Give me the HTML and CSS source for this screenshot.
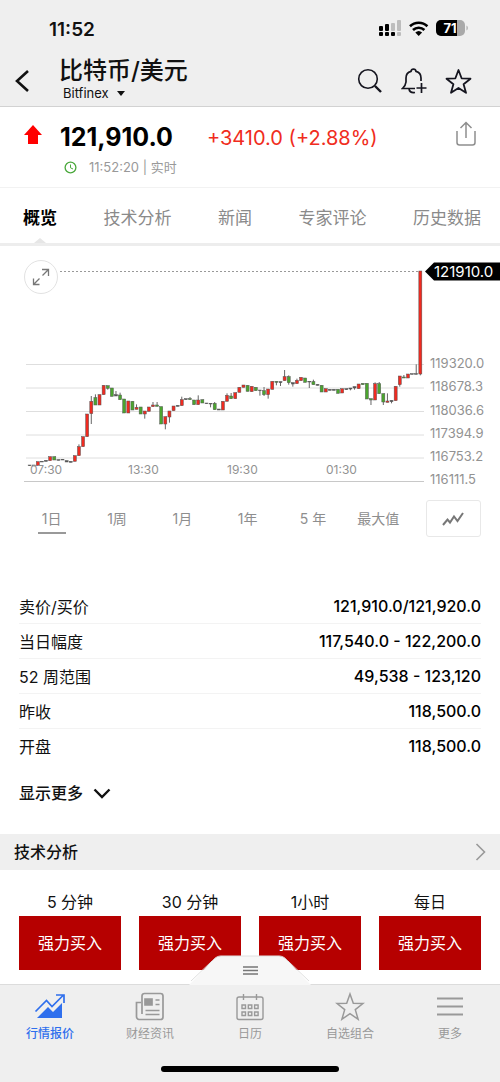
FILE: index.html
```html
<!DOCTYPE html>
<html lang="zh-CN">
<head>
<meta charset="utf-8">
<meta name="viewport" content="width=device-width, initial-scale=1">
<title>比特币/美元</title>
<link rel="stylesheet" href="styles.css">
</head>
<body>
<header class="top">
  <div class="status">
    <time class="clock">11:52</time>
    <svg class="status-icons" width="90" height="20" viewBox="0 0 90 20" aria-hidden="true">
      <g fill="#000"><rect x="1" y="7" width="4" height="5" rx="1"/><rect x="7" y="5" width="4" height="7" rx="1"/><rect x="1" y="13" width="4" height="4" rx="1"/><rect x="7" y="13" width="4" height="4" rx="1"/><rect x="13" y="13" width="4" height="4" rx="1"/></g>
      <g fill="#bdbdbd"><rect x="13" y="4" width="4" height="8" rx="1"/><rect x="19" y="1" width="4" height="11" rx="1"/><rect x="19" y="13" width="4" height="4" rx="1"/></g>
      <g fill="none" stroke="#000" stroke-width="2.6"><path d="M32 7.2a12.5 12.5 0 0 1 17.400 0"/><path d="M35 11a8.200 8.200 0 0 1 11.400 0"/></g>
      <path d="M37.300 13.500a5 5 0 0 1 6.800 0L40.700 17z"/>
      <rect x="58" y="1" width="29" height="16" rx="5" fill="#a9a9a9"/>
      <path d="M63 1h16v16H63a5 5 0 0 1-5-5V6a5 5 0 0 1 5-5z"/>
      <path d="M88.500 6.500v5a3 3 0 0 0 0-5z" fill="#a9a9a9"/>
      <text x="72" y="14" class="battery">71</text>
    </svg>
  </div>
  <div class="titlebar">
    <button class="icon-btn back" aria-label="返回"><svg width="16" height="24" viewBox="0 0 16 24"><path d="M14 2 3 12l11 10" fill="none" stroke="#111" stroke-width="2.600"/></svg></button>
    <div class="names">
      <h1>比特币/美元</h1>
      <button class="exchange">Bitfinex <svg width="8" height="5" viewBox="0 0 8 5"><path d="M0 0h8L4 5z" fill="#111"/></svg></button>
    </div>
    <div class="actions">
      <button class="icon-btn" aria-label="搜索"><svg width="26" height="26" viewBox="0 0 26 26" fill="none" stroke="#15151f"><circle cx="11" cy="11" r="9.300" stroke-width="1.600"/><path d="m18 18 6 6" stroke-width="2.400"/></svg></button>
      <button class="icon-btn" aria-label="提醒"><svg width="26" height="26" viewBox="0 0 26 26" fill="none" stroke="#15151f" stroke-width="1.700"><path d="M14 20.500H1.500c2-2 3.300-3.500 3.500-6.500V10c0-3.500 2-5.800 5-6.600.200-1.500 1-2.200 2.500-2.200S14.800 2 15 3.400c3 .8 5 3.100 5 6.600v3"/><path d="M8 21c.5 2.500 2.500 4 6 3.500M20.500 15v10M15.500 20h10"/></svg></button>
      <button class="icon-btn" aria-label="收藏"><svg width="27" height="26" viewBox="0 0 27 26"><path d="m13.500 2 3.100 8.300 8.900.4-6.900 5.500 2.400 8.600-7.500-4.900L6 24.800l2.400-8.600-6.900-5.500 8.900-.4z" fill="none" stroke="#15151f" stroke-width="1.800" stroke-linejoin="round"/></svg></button>
    </div>
  </div>
</header>

<main>
  <section class="quote">
    <svg class="arrow" width="18" height="19" viewBox="0 0 18 19" aria-hidden="true"><path d="m9 0 9 10h-4v9H4v-9H0z" fill="#f00"/></svg>
    <div class="price-block">
      <div class="price-line"><strong class="price">121,910.0</strong><span class="change">+3410.0 (+2.88%)</span></div>
      <div class="stamp"><svg width="13" height="13" viewBox="0 0 13 13" fill="none" stroke="#4aa83c"><circle cx="6.500" cy="6.500" r="5.400" stroke-width="1.300"/><path d="M6.500 3.500v3.300L9 8"/></svg><span>11:52:20 | 实时</span></div>
    </div>
    <button class="icon-btn share" aria-label="分享"><svg width="20" height="25" viewBox="0 0 20 25" fill="none" stroke="#8e8e8e" stroke-width="1.500"><path d="M1 10v11.500c0 1.500 1 2.500 2.500 2.500h13c1.500 0 2.500-1 2.500-2.500V10M10 17V1.500M4.500 7 10 1.500 15.500 7"/></svg></button>
  </section>

  <nav class="tabs">
    <a href="#overview" class="active" aria-current="page">概览</a>
    <a href="#technical">技术分析</a>
    <a href="#news">新闻</a>
    <a href="#comments">专家评论</a>
    <a href="#history">历史数据</a>
  </nav>

  <section class="chart" id="overview">
    <svg class="plot" viewBox="0 246 500 250" role="img" aria-label="价格走势">
      <g class="grid">
        <path d="M26 364.500H424M26 388H424M26 411.500H424M26 435H424M26 458H424"/>
        <path class="base" d="M24 481.500H424"/>
      </g>
      <path class="last-line" d="M60 271.500H420"/>
      <g class="candles"></g>
      <g class="times"><text x="30" y="474">07:30</text><text x="128" y="474">13:30</text><text x="227" y="474">19:30</text><text x="326" y="474">01:30</text></g>
      <g class="levels"><text x="430" y="368">119320.0</text><text x="430" y="391">118678.3</text><text x="430" y="415">118036.6</text><text x="430" y="438">117394.9</text><text x="430" y="461">116753.2</text><text x="430" y="484">116111.5</text></g>
      <path d="M425 271.500 434 262.500H500V280.500H434z"/>
      <text class="last" x="434" y="277">121910.0</text>
    </svg>
    <button class="expand" aria-label="全屏"><svg width="18" height="18" viewBox="0 0 18 18" fill="none" stroke="#777" stroke-width="1.300"><path d="m10.500 7.500 6-6M10 1.500h6.500v6.500M7.500 10.500l-6 6M1.500 10.500v6H7.500"/></svg></button>
  </section>

  <div class="ranges">
    <button class="range active">1日</button>
    <button class="range">1周</button>
    <button class="range">1月</button>
    <button class="range">1年</button>
    <button class="range">5 年</button>
    <button class="range">最大值</button>
    <button class="chart-type" aria-label="图表类型"><svg width="22" height="14" viewBox="0 0 22 14"><path d="M1 13 5.500 7.500 8 10.500 12 4.500l3.500 4.500L21 1" fill="none" stroke="#777" stroke-width="2"/></svg></button>
  </div>

  <dl class="stats">
    <div><dt>卖价/买价</dt><dd>121,910.0/121,920.0</dd></div>
    <div><dt>当日幅度</dt><dd>117,540.0 - 122,200.0</dd></div>
    <div><dt>52 周范围</dt><dd>49,538 - 123,120</dd></div>
    <div><dt>昨收</dt><dd>118,500.0</dd></div>
    <div><dt>开盘</dt><dd>118,500.0</dd></div>
  </dl>
  <button class="more">显示更多 <svg width="18" height="11" viewBox="0 0 18 11"><path d="m1.500 1.500 7.500 7.500 7.500-7.500" fill="none" stroke="#111" stroke-width="2.400"/></svg></button>

  <section id="technical">
    <h2 class="section-head"><a href="#technical-all">技术分析 <svg width="11" height="18" viewBox="0 0 11 18"><path d="m1.500 1 8 8-8 8" fill="none" stroke="#999" stroke-width="1.600"/></svg></a></h2>
    <div class="signals">
      <div><span>5 分钟</span><button>强力买入</button></div>
      <div><span>30 分钟</span><button>强力买入</button></div>
      <div><span>1小时</span><button>强力买入</button></div>
      <div><span>每日</span><button>强力买入</button></div>
    </div>
  </section>
</main>

<footer class="dock">
  <button class="drawer" aria-label="展开"><svg width="122" height="30" viewBox="0 0 122 30"><path d="M0 30C2 28 4 26 6 24L22 7C26 3 28 1 32 1H90C94 1 96 3 100 7l16 17c2 2 4 4 6 6z" fill="#f7f7f7"/><path d="M2 26 22 7C26 3 28 1 32 1H90C94 1 96 3 100 7l20 19" fill="none" stroke="#e0e0e0"/><path d="M54 12h15M54 15.500h15M54 19h15" stroke="#777" stroke-width="1.300"/></svg></button>
  <nav class="bottom">
    <a href="#quotes" class="active"><svg width="32" height="30" viewBox="0 0 32 30"><path d="M3 26 14 15l5 5 9-9v15z" fill="#2f6fed"/><path d="m1.500 19.500 11-11 5.500 6L29.500 3M22 3h8v8" fill="none" stroke="#2f6fed" stroke-width="1.700"/></svg><span>行情报价</span></a>
    <a href="#headlines"><svg width="30" height="30" viewBox="0 0 30 30" fill="none" stroke="#999" stroke-width="1.700"><path d="M7 22V4c0-1.500 1-2.500 2.500-2.500h16C27 1.500 28 2.500 28 4v21c0 1.500-1 2.500-2.500 2.500H4C2.500 27.500 1.500 26 1.500 24.500V10.500H6"/><path d="M10.500 18.500h14M10.500 22.500h14M20.500 8h4M20.500 12.500h4"/><path d="M10 7h7v6h-7z" fill="#999"/></svg><span>财经资讯</span></a>
    <a href="#calendar"><svg width="30" height="30" viewBox="0 0 30 30" fill="none" stroke="#999" stroke-width="1.400"><rect x="2" y="5" width="26" height="22.500" rx="2"/><path d="M8.500 2v6M21.500 2v6"/><path d="M7 13h3.500v3.500H7zM13.300 13h3.500v3.500h-3.500zM19.600 13h3.500v3.500h-3.500zM7 20h3.500v3.500H7zM13.300 20h3.500v3.500h-3.500zM19.600 20h3.500v3.500h-3.500z"/></svg><span>日历</span></a>
    <a href="#watchlist"><svg width="30" height="30" viewBox="0 0 30 30"><path d="m15 2 3.300 9.300 9.700.2-7.700 6.100 2.800 9.700-8.100-5.600-8.100 5.600 2.800-9.700L2 11.500l9.700-.2z" fill="none" stroke="#999" stroke-width="1.500"/></svg><span>自选组合</span></a>
    <a href="#menu"><svg width="28" height="30" viewBox="0 0 28 30"><path d="M1 6.500h26M1 14.500h26M1 22.500h26" stroke="#999" stroke-width="2"/></svg><span>更多</span></a>
  </nav>
  <div class="home"></div>
</footer>
<script src="chart.js"></script>
</body>
</html>
```
FILE: styles.css
```css
* { box-sizing: border-box; }
body {
  margin: 0;
  min-height: 100vh;
  display: flex;
  flex-direction: column;
  background: #fff;
  color: #111;
  font-family: Inter, "Noto Sans CJK SC", sans-serif;
}
button { padding: 0; border: 0; background: none; color: inherit; font: inherit; cursor: pointer; }
a { color: inherit; text-decoration: none; }
svg { display: block; }
h1, h2, dl, dd { margin: 0; }

.top { background: #efefef; border-bottom: 1px solid #d2d2d2; }
.status { height: 52px; padding: 6px 32px 0 49px; display: flex; justify-content: space-between; align-items: center; }
.clock { font-size: 19px; font-weight: 600; }
.battery { font-size: 13px; font-weight: 700; fill: #fff; text-anchor: middle; }
.titlebar { height: 54px; padding: 0 28px 0 14px; display: flex; align-items: center; }
.icon-btn { flex: none; }
.back { padding-top: 4px; }
.names { flex: 1; padding-left: 29px; display: flex; flex-direction: column; align-items: flex-start; }
h1 { font-size: 24px; line-height: 28px; font-weight: 500; }
.exchange { display: flex; align-items: center; gap: 8px; margin-left: 4px; font-size: 13px; line-height: 16px; }
.actions { display: flex; gap: 18px; padding-top: 4px; }

.quote { height: 81px; padding: 14px 24px 0; display: flex; align-items: flex-start; border-bottom: 1px solid #f2f2f2; }
.arrow { margin-top: 4px; }
.price-block { flex: 1; padding-left: 18px; }
.price-line { display: flex; align-items: center; gap: 34px; line-height: 30px; white-space: nowrap; }
.price { font-size: 25px; font-weight: 700; color: #000; }
.change { padding-top: 2px; font-size: 20px; color: #f02c20; }
.stamp { display: flex; align-items: center; gap: 12px; padding-left: 4px; font-size: 13px; line-height: 28px; color: #999; }

.tabs { height: 58px; padding: 0 19px 0 23px; display: flex; justify-content: space-between; border-bottom: 3px solid #ededed; font-size: 17px; line-height: 60px; color: #8a8a8a; white-space: nowrap; }
.tabs a { position: relative; height: 55px; }
.tabs .active { color: #000; font-weight: 700; }
.tabs .active::after { content: ""; position: absolute; left: 50%; bottom: 0; margin-left: -6px; border: 6px solid transparent; border-top: 0; border-bottom: 5px solid #e6e6e6; }

.chart { position: relative; }
.plot { width: 100%; height: auto; }
.grid path { fill: none; stroke: #dedede; }
.grid .base { stroke: #c8c8c8; }
.last-line { stroke: #999; stroke-dasharray: 2 2; }
.times, .levels { fill: #929292; font-size: 12px; }
.levels { font-size: 13px; }
.last { fill: #fff; font-size: 15px; }
.wick { stroke: #666; stroke-width: 1; }
.candle { stroke: #555; stroke-width: .5; }
.up { fill: #f02a20; }
.down { fill: #4aa52e; }
.flat { fill: #555; }
.expand { position: absolute; left: 24px; top: 14px; width: 34px; height: 34px; display: grid; place-items: center; border: 1px solid #e2e2e2; border-radius: 50%; background: #fff; }

.ranges { padding: 4px 19px 0; display: flex; align-items: center; font-size: 14px; color: #8e8e8e; }
.range { flex: 1; display: flex; justify-content: center; line-height: 28px; white-space: nowrap; }
.range.active::after { content: ""; position: absolute; width: 28px; height: 2px; margin-top: 27px; background: #999; }
.chart-type { width: 55px; height: 37px; margin-left: 15px; display: grid; place-items: center; border: 1px solid #e8e8e8; border-radius: 3px; }

.stats { padding: 52px 19px 0; }
.stats div { height: 35px; display: flex; justify-content: space-between; align-items: center; border-bottom: 1px solid #f3f3f3; }
.stats div:last-child { border-bottom-color: transparent; }
.stats dt { font-size: 16px; }
.stats dd { font-size: 16px; font-weight: 500; color: #000; }
.more { display: flex; align-items: center; gap: 10px; margin: 16px 19px 28px; font-size: 16px; font-weight: 500; line-height: 26px; }

.section-head { background: #efefef; font-size: 16px; font-weight: 500; line-height: 36px; }
.section-head a { display: flex; justify-content: space-between; align-items: center; padding: 0 14px; }
.signals { display: grid; grid-template-columns: repeat(4, 1fr); gap: 18px; padding: 18px 19px 14px; text-align: center; font-size: 16px; line-height: 28px; }
.signals span, .signals button { display: block; width: 100%; }
.signals button { height: 54px; background: #b60000; color: #fff; }

.dock { position: relative; margin-top: auto; background: #efefef; border-top: 1px solid #dcdcdc; padding-bottom: 10px; }
.drawer { position: absolute; left: 50%; bottom: 100%; transform: translateX(-50%); }
.bottom { display: grid; grid-template-columns: repeat(5, 1fr); padding: 7px 0 24px; color: #999; font-size: 12px; line-height: 16px; }
.bottom a { display: flex; flex-direction: column; align-items: center; gap: 4px; }
.bottom .active { color: #2f6fed; font-weight: 500; }
.home { width: 178px; height: 6px; margin: 0 auto; border-radius: 3px; background: #000; }
```
FILE: chart.js
```js
// Each candle: kind (u up, d down, f flat), body top, body bottom, wick top, wick bottom.
// Levels are in thirds of a unit below y = 350.
const candles = `f 345 347;f 345 348;u 335 347;f 334 336;f 331 334;u 320 332;d 320 330;f 329 331;f 328 330;f 332 336;f 334 337;u 317 334;u 290 317 283;u 260 290;u 192 260;u 154 191 138 222;d 143 165 133;u 134 165;u 106 134;d 107 115 107 119;d 114 139;f 134 138 123;d 135 149 128;d 147 189;u 153 189;d 154 180;u 172 178 163;d 171 192;u 183 192 183 206;u 171 184;u 165 170 156;d 165 169 156;d 170 222;u 200 222 200 238;u 183 201 183 218;u 168 182;f 166 169;u 149 167 140;f 146 149;d 146 149 141;d 150 164;u 150 164 136;d 149 159;f 159 161;f 160 162 160 172;d 160 179 156;f 177 180;u 154 180;u 136 154 130;d 138 146 129;u 128 146;u 112 127;u 105 112;d 106 124;u 109 125;d 112 122;f 120 122 120 137;d 122 134 111 138;u 117 134 117 146;u 94 118;d 94 97 94 106;f 95 98 95 108;u 80 92 60;d 80 98 76 104;f 98 102 98 110;u 91 101 86;u 82 92;d 84 97;f 94 96 94 114;d 95 104 89;f 103 106;d 106 126;u 116 126;f 118 121;f 118 121;d 118 130;u 116 129;f 116 119;f 114 117 114 121;f 110 114 110 119;u 102 116;d 100 104;d 100 147;d 146 150 146 165;u 101 150 97;d 101 131 96;d 131 156 131 165;u 153 157 130;f 151 155 151 160;u 109 152;u 78 104 78 110;d 81 84 75;u 72 84;f 71 73;f 71 73 43;u -237 72 -237 76`.split(";");
const classes = { u: "up", d: "down", f: "flat" };
const y = v => 350 + v / 3;
document.querySelector(".candles").innerHTML = candles.map((row, i) => {
  const [kind, a, b, c = a, d = b] = row.split(" ");
  const x = 29.6 + i * 4.113;
  return `<path class="wick" d="M${x} ${y(+c)}V${y(Math.max(+b, +d))}"/><rect class="candle ${classes[kind]}" x="${x - 1.5}" y="${y(+a)}" width="3" height="${(b - a) / 3}"/>`;
}).join("");
```
